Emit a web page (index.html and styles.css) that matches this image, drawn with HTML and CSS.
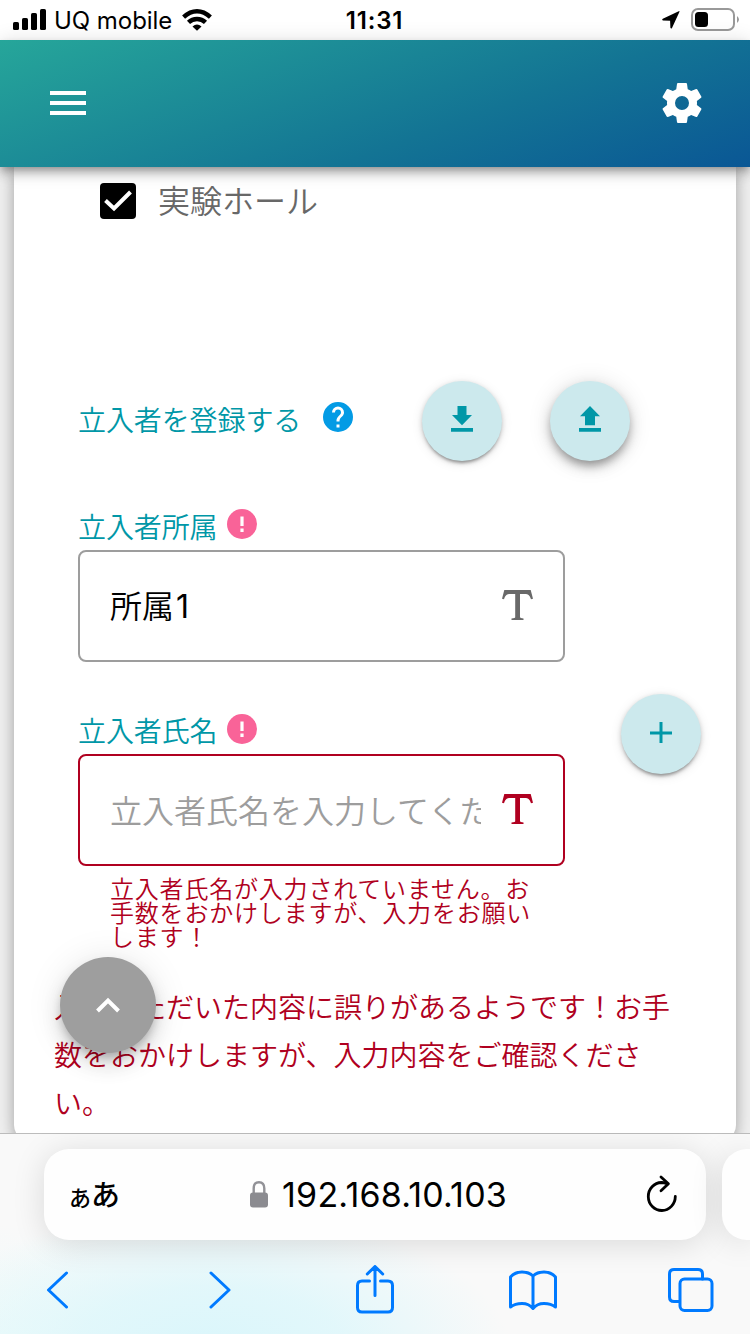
FILE: index.html
```html
<!DOCTYPE html>
<html lang="ja">
<head>
<meta charset="utf-8">
<title>立入者登録</title>
<link rel="stylesheet" href="styles.css">
</head>
<body>
<div class="status">
  <div class="status-left">
    <svg class="signal" width="34" height="22" viewBox="0 0 34 22"><rect x="0" y="13" width="6" height="8" rx="1.6"/><rect x="9" y="9" width="6" height="12" rx="1.6"/><rect x="18" y="4" width="6" height="17" rx="1.6"/><rect x="27" y="0" width="6" height="21" rx="1.6"/></svg>
    <span class="carrier">UQ mobile</span>
    <svg class="wifi" width="30" height="22" viewBox="0 0 30 22"><g fill="none" stroke="#000" stroke-width="4.400"><path d="M1.600 8.100Q8 2.200 15 2.200t13.400 5.900"/><path d="M6.500 13.400Q10 10 15 10t8.500 3.400"/></g><path d="M10.500 17.400Q15 13.600 19.500 17.400L15 21.800z"/></svg>
  </div>
  <div class="time">11:31</div>
  <div class="status-right">
    <svg width="18" height="18" viewBox="0 0 18 18"><path d="M17.600.6Q18 0 16.700.3L.8 7.800Q-.5 9 .9 9.400L8.100 9.700 8.400 16.700Q9 18.200 10 17z"/></svg>
    <svg width="48" height="24" viewBox="0 0 48 24"><rect x="1" y="1" width="42" height="21" rx="6" fill="none" stroke="#999" stroke-width="2"/><rect x="4" y="4" width="13" height="15" rx="3.500"/><path d="M46 8q4 3.500 0 7z" fill="#999"/></svg>
  </div>
</div>
<header class="appbar">
  <svg width="36" height="24" viewBox="0 0 36 24" fill="#fff"><path d="M0 0h36v4H0zM0 10h36v4H0zM0 20h36v4H0z"/></svg>
  <svg width="48" height="48" viewBox="0 0 24 24" fill="#fff"><path d="M19.430 12.980c.04-.32.07-.64.07-.98s-.03-.66-.07-.98l2.110-1.650c.19-.15.24-.42.12-.64l-2-3.460c-.12-.22-.39-.3-.61-.22l-2.490 1c-.52-.4-1.080-.73-1.690-.98l-.38-2.650C14.460 2.180 14.250 2 14 2h-4c-.25 0-.46.18-.49.42l-.38 2.650c-.61.25-1.170.59-1.690.98l-2.490-1c-.23-.09-.49 0-.61.22l-2 3.460c-.13.22-.07.49.12.64l2.110 1.650c-.04.32-.07.65-.07.98s.03.66.07.98l-2.110 1.650c-.19.15-.24.42-.12.64l2 3.460c.12.22.39.3.61.22l2.490-1c.52.4 1.080.73 1.690.98l.38 2.650c.03.24.24.42.49.42h4c.25 0 .46-.18.49-.42l.38-2.650c.61-.25 1.170-.59 1.690-.98l2.490 1c.23.09.49 0 .61-.22l2-3.460c.12-.22.07-.49-.12-.64zM12 15.500A3.500 3.500 0 1 1 12 8.500a3.500 3.500 0 0 1 0 7z"/></svg>
</header>
<main class="viewport">
  <section class="card">
    <div class="check-row">
      <svg width="36" height="36" viewBox="0 0 36 36"><rect width="36" height="36" rx="4"/><path d="M5.500 17.500L14 25.500 30.500 9" fill="none" stroke="#fff" stroke-width="4"/></svg>
      <span>実験ホール</span>
    </div>
    <div class="register-row">
      <span class="label">立入者を登録する</span>
      <svg class="help" width="30" height="30" viewBox="2 2 20 20" fill="#039be5"><path d="M12 2a10 10 0 1 0 0 20 10 10 0 0 0 0-20zm1 17h-2v-2h2zm2.070-7.750l-.9.920C13.450 12.900 13 13.500 13 15h-2v-.5c0-1.100.45-2.100 1.170-2.830l1.240-1.260c.37-.36.59-.86.59-1.410a2 2 0 0 0-4 0H8a4 4 0 0 1 8 0c0 .88-.36 1.680-.93 2.250z"/></svg>
      <button class="round download"><svg width="22" height="26" viewBox="0 0 22 26"><path d="M6.500 0h9v9H21L11 19.200 1 9h5.500zM0 22h22v3.700H0z"/></svg></button>
      <button class="round raised"><svg width="22" height="26" viewBox="0 0 22 26"><path d="M11 0L21 10.200h-5v9H6v-9H1zM0 22h22v3.700H0z"/></svg></button>
    </div>
    <div class="label-row">
      <span class="label">立入者所属</span>
      <svg width="30" height="30" viewBox="0 0 30 30"><circle cx="15" cy="15" r="15" fill="#f96398"/><path d="M13.400 7.500h3.200v9.500h-3.200zM13.400 19.500h3.200V23h-3.200z" fill="#fff"/></svg>
    </div>
    <div class="field">
      <span class="value">所属<span class="digit">1</span></span>
      <svg class="type" width="31" height="31" viewBox="0 0 31 31"><path d="M2.300 0h26.400L31 8.800l-2 .4C27.500 5 26 4 23 4h-5v23.200q0 .8 3.500 1.200V30h-12v-1.600q3.700-.4 3.700-1.200V4H8C5 4 3.500 5 2 9.200L0 8.800z"/></svg>
    </div>
    <div class="name-row">
      <div class="name-column">
        <div class="label-row">
          <span class="label">立入者氏名</span>
          <svg width="30" height="30" viewBox="0 0 30 30"><circle cx="15" cy="15" r="15" fill="#f96398"/><path d="M13.400 7.500h3.200v9.500h-3.200zM13.400 19.500h3.200V23h-3.200z" fill="#fff"/></svg>
        </div>
        <div class="field invalid">
          <span class="placeholder">立入者氏名を入力してください</span>
          <svg class="type" width="31" height="31" viewBox="0 0 31 31"><path d="M2.300 0h26.400L31 8.800l-2 .4C27.500 5 26 4 23 4h-5v23.200q0 .8 3.500 1.200V30h-12v-1.600q3.700-.4 3.700-1.200V4H8C5 4 3.500 5 2 9.200L0 8.800z"/></svg>
        </div>
        <p class="field-error">立入者氏名が入力されていません。お<br>手数をおかけしますが、入力をお願い<br>します！</p>
      </div>
      <button class="round plus"><svg width="22" height="22" viewBox="0 0 22 22"><path d="M9.500 0h3v9.500H22v3h-9.500V21h-3v-8.500H0v-3h9.500z"/></svg></button>
    </div>
    <p class="form-error">入力いただいた内容に誤りがあるようです！お手<br>数をおかけしますが、入力内容をご確認くださ<br>い。</p>
  </section>
  <button class="to-top"><svg width="24" height="16" viewBox="0 0 24 16"><path d="M1.500 14L12 3.500 22.500 14" fill="none" stroke="#fff" stroke-width="4"/></svg></button>
</main>
<footer class="browser">
  <div class="tabs">
    <div class="address">
      <span class="reader"><small>あ</small>あ</span>
      <span class="host"><svg width="18" height="27" viewBox="0 0 18 27"><path d="M3.700 13V7.500q0-6.300 5.300-6.300t5.300 6.300V13" fill="none" stroke="#929297" stroke-width="2.400"/><rect y="11.500" width="18" height="15" rx="3" fill="#8b8b90"/></svg>192.168.10.103</span>
      <svg class="reload" width="32" height="38" viewBox="0 0 32 38"><g fill="none" stroke="#000" stroke-width="2.800" stroke-linecap="round" stroke-linejoin="round"><path d="M21 8.800Q18 7.500 15.500 7.500a13.500 14 0 1 0 13.800 14"/><path d="M15 2l7.400 6.800-7.400 7"/></g></svg>
    </div>
    <div class="next-tab"></div>
  </div>
  <nav class="tools">
    <svg width="24" height="38" viewBox="0 0 24 38"><path d="M20.500 2L2.500 19l18 17"/></svg>
    <svg width="24" height="38" viewBox="0 0 24 38"><path d="M2 2l18 17L2 36"/></svg>
    <svg width="40" height="50" viewBox="0 0 40 50"><path d="M14.500 16H7q-4.500 0-4.500 4.500v22Q2.500 47 7 47h26q4.500 0 4.500-4.500v-22Q37.500 16 33 16h-7.500M20 30.500V2M12.300 9L20 1.500 27.700 9"/></svg>
    <svg width="48" height="40" viewBox="0 0 48 40"><path d="M24 6Q20 2 13 2T1.500 7v30Q6 33.500 13 33.500T24 38.500zM24 6Q28 2 35 2t11.500 5v30Q42 33.500 35 33.500t-11 5"/></svg>
    <svg width="46" height="44" viewBox="0 0 46 44"><path d="M11.500 33.500H6q-4.500 0-4.500-4.500V6Q1.500 1.500 6 1.500h24q4.500 0 4.500 4.500v5"/><rect x="12" y="11" width="32" height="31.500" rx="4.500"/></svg>
  </nav>
</footer>
</body>
</html>
```
FILE: styles.css
```css
* { box-sizing: border-box; }
body {
  margin: 0;
  width: 750px;
  height: 1334px;
  overflow: hidden;
  display: flex;
  flex-direction: column;
  background: #fff;
  font-family: "Noto Sans CJK JP", sans-serif;
  font-weight: 350;
}
svg { display: block; flex: none; }
button { border: 0; padding: 0; }
p { margin: 0; white-space: nowrap; }

.status {
  height: 40px;
  flex: none;
  display: grid;
  grid-template-columns: 1fr auto 1fr;
  align-items: center;
  padding: 0 11px 0 13px;
  font-family: Inter, sans-serif;
}
.status-left { display: flex; align-items: center; }
.carrier { margin: 2px 10px 0 7px; font-size: 24px; font-weight: 400; line-height: 30px; letter-spacing: -0.05px; }
.time { font-size: 24px; font-weight: 600; line-height: 30px; padding-top: 2px; margin-right: 3px; letter-spacing: 0.8px; }
.status-right { display: flex; align-items: center; justify-content: flex-end; gap: 11px; }

.appbar {
  height: 127px;
  flex: none;
  display: flex;
  align-items: center;
  justify-content: space-between;
  padding: 0 44px 2px 50px;
  background: linear-gradient(160deg, #26a69a 0%, #137494 62%, #0a5795 100%);
  box-shadow: 0 4px 8px -2px rgba(0, 0, 0, .3), 0 8px 10px rgba(0, 0, 0, .14), 0 2px 20px rgba(0, 0, 0, .14);
  position: relative;
  z-index: 2;
}

.viewport { position: relative; height: 966px; flex: none; overflow: hidden; background: #f2f2f2; }
.card {
  width: 722px;
  height: 974px;
  margin: 0 auto;
  padding: 16px 0 0 64px;
  border-radius: 0 0 16px 16px;
  background: #fff;
  box-shadow: 0 6px 12px rgba(0, 0, 0, .2), 0 2px 26px rgba(0, 0, 0, .18);
}
.check-row { display: flex; align-items: center; gap: 22px; height: 36px; margin-left: 22px; color: #686868; font-size: 32px; line-height: 36px; }
.check-row span { padding-bottom: 4px; }
.register-row { display: flex; align-items: center; height: 80px; margin-top: 162px; }
.label { color: #0097a7; font-size: 28px; line-height: 40px; letter-spacing: -0.1px; }
.register-row .label { padding-bottom: 4px; }
.help { margin: 0 0 8px 22px; }
.round {
  width: 80px;
  height: 80px;
  flex: none;
  display: flex;
  align-items: center;
  justify-content: center;
  border-radius: 50%;
  background: #cce9ed;
  fill: #0097a7;
  box-shadow: 0 4px 3px -2px rgba(0, 0, 0, .28), 0 2px 5px rgba(0, 0, 0, .18), 0 2px 12px rgba(0, 0, 0, .1);
}
.round svg { margin-bottom: 4px; }
.download { margin: 0 48px 0 69px; }
.raised { box-shadow: 0 6px 8px -2px rgba(0, 0, 0, .3), 0 6px 14px rgba(0, 0, 0, .15), 0 2px 24px rgba(0, 0, 0, .12); }
.label-row { display: flex; align-items: center; gap: 9px; height: 40px; margin-top: 45px; }
.label-row svg { margin-bottom: 5px; }
.field {
  width: 487px;
  height: 112px;
  margin-top: 4px;
  padding: 0 30px;
  display: flex;
  align-items: center;
  justify-content: space-between;
  border: 2px solid #9d9d9d;
  border-radius: 8px;
  fill: #696969;
}
.value { padding-bottom: 1px; font-size: 32px; line-height: 48px; color: #000; }
.digit { font-family: Inter, sans-serif; font-weight: 400; margin-left: 2px; }
.type { margin-bottom: 2px; }
.invalid { border-color: #b00020; fill: #b00020; }
.placeholder { width: 371px; padding-bottom: 2px; overflow: hidden; white-space: nowrap; font-size: 32px; line-height: 48px; color: #9d9d9d; }
.name-row { display: flex; margin-top: 32px; }
.name-column { width: 487px; }
.name-row .label-row { margin-top: 16px; }
.name-row .label-row svg { margin-bottom: 3px; }
.plus { margin-left: 56px; }
.plus svg { margin-bottom: 3px; }
.field-error { margin: 10px 0 0 32px; font-size: 24px; letter-spacing: 0.8px; line-height: 24px; color: #b00020; }
.form-error { margin: 34px 0 0 -24px; font-size: 28px; line-height: 48px; color: #b00020; }
.to-top {
  position: absolute;
  left: 60px;
  top: 790px;
  width: 96px;
  height: 96px;
  border-radius: 50%;
  background: #9e9e9e;
  display: flex;
  align-items: center;
  justify-content: center;
  box-shadow: 0 6px 10px -2px rgba(0, 0, 0, .22), 0 12px 20px rgba(0, 0, 0, .12), 0 2px 36px rgba(0, 0, 0, .1);
}

.browser {
  height: 201px;
  flex: none;
  border-top: 1px solid #bcbcbc;
  background:
    radial-gradient(ellipse 300px 140px at 210px 215px, #daf6fb 0%, rgba(222, 247, 251, .85) 45%, rgba(236, 250, 252, 0) 100%),
    radial-gradient(ellipse 160px 110px at 0 201px, #effbfa, rgba(239, 251, 250, 0)),
    #f9f9f9;
}
.tabs { display: flex; gap: 16px; padding: 15px 0 0 44px; overflow: visible; }
.address, .next-tab { height: 91px; flex: none; background: #fefefe; box-shadow: 0 4px 32px rgba(0, 0, 0, .13); }
.address { width: 662px; border-radius: 25px; display: flex; align-items: center; padding: 0 28px 0 25px; color: #000; }
.next-tab { width: 28px; border-radius: 25px 0 0 25px; }
.reader { font-size: 29px; font-weight: 450; line-height: 40px; width: 52px; white-space: nowrap; }
.reader small { font-size: 22px; }
.host { display: flex; align-items: center; gap: 14px; margin: 0 139px 0 auto; font-family: Inter, sans-serif; font-weight: 400; font-size: 34px; line-height: 44px; letter-spacing: 0.2px; }
.reload { margin-bottom: 2px; }
.tools {
  display: grid;
  grid-template-columns: 163px 146px 154px 159px 46px;
  align-items: center;
  height: 50px;
  margin-top: 25px;
  padding-left: 46px;
  fill: none;
  stroke: #007aff;
  stroke-width: 3;
  stroke-linecap: round;
  stroke-linejoin: round;
}
```
